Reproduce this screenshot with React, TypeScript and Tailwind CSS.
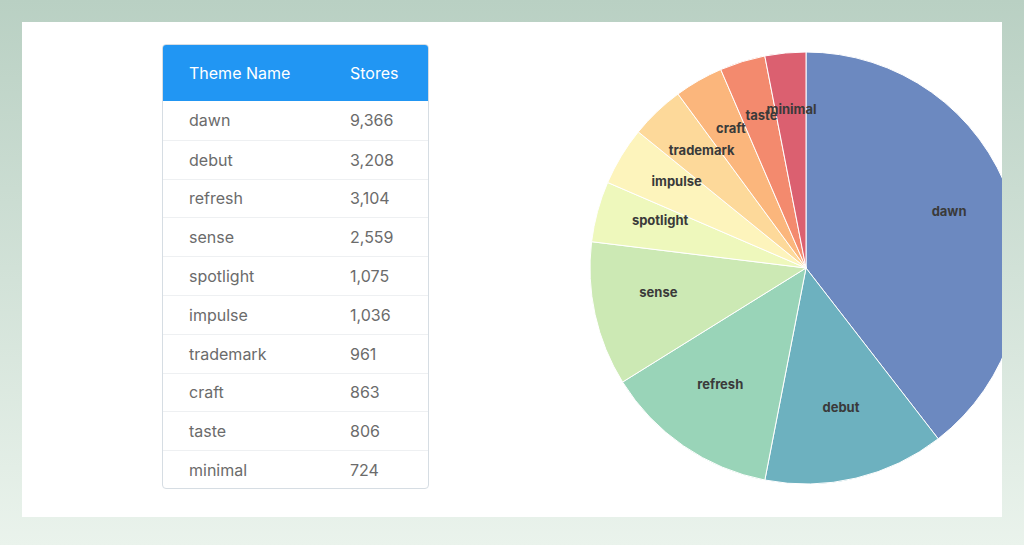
const DATA: [string, number, string][] = [
  ['dawn', 9366, '#6c89c0'],
  ['debut', 3208, '#6db1bf'],
  ['refresh', 3104, '#99d4b8'],
  ['sense', 2559, '#cce9b4'],
  ['spotlight', 1075, '#eef8bc'],
  ['impulse', 1036, '#fdf4bc'],
  ['trademark', 961, '#fdd99a'],
  ['craft', 863, '#fbb67c'],
  ['taste', 806, '#f38a6e'],
  ['minimal', 724, '#db6070'],
];

function Pie() {
  const total = DATA.reduce((s, d) => s + d[1], 0);
  const cx = 218;
  const cy = 246;
  const r = 216;
  let a0 = 0;
  const pt = (a: number, rr: number) => [cx + rr * Math.sin(a), cy - rr * Math.cos(a)];
  const slices = DATA.map(([name, v, c]) => {
    const a1 = a0 + (v / total) * Math.PI * 2;
    const [x0, y0] = pt(a0, r);
    const [x1, y1] = pt(a1, r);
    const large = a1 - a0 > Math.PI ? 1 : 0;
    const mid = (a0 + a1) / 2;
    const [lx, ly] = pt(mid, r * 0.7);
    a0 = a1;
    return { name, c, d: `M${cx},${cy} L${x0},${y0} A${r},${r} 0 ${large} 1 ${x1},${y1} Z`, lx, ly: ly - 7 };
  });
  return (
    <svg width="436" height="495" className="shrink-0 overflow-visible">
      {slices.map((s) => (
        <path key={s.name} d={s.d} fill={s.c} stroke="#fff" strokeWidth="1" />
      ))}
      {slices.map((s) => (
        <text key={s.name} x={s.lx} y={s.ly} textAnchor="middle" dominantBaseline="middle" fontSize="13" fontWeight="700" fill="#3a3a3a" style={{ fontFamily: 'Inter, sans-serif' }}>
          {s.name}
        </text>
      ))}
    </svg>
  );
}

export default function App() {
  return (
    <div className="w-[1024px] h-[545px] bg-gradient-to-b from-[#b9d0c3] to-[#eaf3ec] pt-[22px] px-[22px] font-[Inter,sans-serif]">
      <div className="bg-white h-[495px] w-[980px] flex overflow-hidden">
        <div className="ml-[140px] mt-[22px] w-[267px] h-[445px] border border-[#d6dde3] rounded-[4px] overflow-hidden shrink-0">
          <div className="bg-[#2196f3] h-[56px] flex items-center text-white text-[16px]">
            <div className="pl-[26px] w-[187px]">Theme Name</div>
            <div>Stores</div>
          </div>
          {DATA.map(([name, v], i) => (
            <div key={name} className={`h-[38.8px] flex items-center text-[16px] text-[#6b6b6b] ${i > 0 ? 'border-t border-[#eef0f2]' : ''}`}>
              <div className="pl-[26px] w-[187px]">{name}</div>
              <div>{v.toLocaleString('en-US')}</div>
            </div>
          ))}
        </div>
        <div className="ml-[159px]">
          <Pie />
        </div>
      </div>
    </div>
  );
}
